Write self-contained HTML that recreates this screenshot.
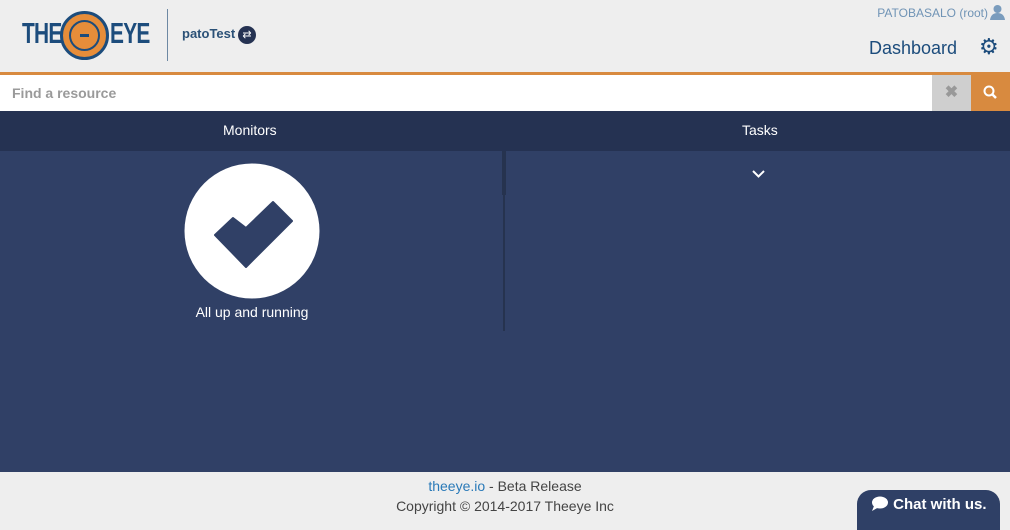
<!DOCTYPE html>
<html><head><meta charset="utf-8"><style>
*{margin:0;padding:0;box-sizing:border-box}
body{width:1010px;height:522px;overflow:hidden;font-family:"Liberation Sans",sans-serif;background:#eeeeee;position:relative}
.hdr{position:absolute;left:0;top:0;width:1010px;height:72px;background:#eeeeee}
.orange{position:absolute;top:72px;left:0;width:1010px;height:3px;background:#d88a3f}
.search{position:absolute;top:75px;left:0;width:932px;height:36px;background:#fff;color:#9a9a9a;font-size:14px;font-weight:bold;padding:10px 12px}
.xbtn{position:absolute;top:75px;left:932px;width:39px;height:36px;background:#cfcfcf;color:#999;font-size:16px;text-align:center;line-height:36px;font-weight:bold}
.sbtn{position:absolute;top:75px;left:971px;width:39px;height:36px;background:#d88a3f}
.tabs{position:absolute;top:111px;left:0;width:1010px;height:40px;background:#253252;color:#fff;font-size:14px}
.main{position:absolute;top:151px;left:0;width:1010px;height:321px;background:#304066}
.foot{position:absolute;top:472px;left:0;width:1010px;height:50px;text-align:center;font-size:14px;color:#444;line-height:20px;padding-top:4px}
.lg{position:absolute;top:18px;font-size:29px;font-weight:bold;color:#1c4c7c;transform:scaleX(.72);transform-origin:left;letter-spacing:-1px}
</style></head><body>
<div class="hdr">
 <div class="lg" style="left:22px">THE</div>
 <div style="position:absolute;left:60px;top:11px;width:49px;height:49px;border-radius:50%;background:#e68d3a;border:3px solid #1c4c7c"><div style="position:absolute;left:6px;top:6px;width:31px;height:31px;border-radius:50%;border:2px solid #1c4c7c"></div><div style="position:absolute;left:17px;top:20px;width:9px;height:3px;background:#1c4c7c"></div></div>
 <div class="lg" style="left:110px">EYE</div>
 <div style="position:absolute;left:167px;top:9px;width:1px;height:52px;background:#6d88a3"></div>
 <div style="position:absolute;left:182px;top:26px;font-size:13px;font-weight:bold;color:#2b5177">patoTest</div>
 <div style="position:absolute;left:238px;top:26px;width:18px;height:18px;border-radius:50%;background:#253252;color:#fff;font-size:11px;text-align:center;line-height:18px">⇄</div>
 <div style="position:absolute;right:22px;top:6px;font-size:12px;color:#6f93b5">PATOBASALO (root)</div>
 <svg style="position:absolute;left:990px;top:4px" width="15" height="16" viewBox="0 0 15 16"><circle cx="7.5" cy="5" r="4" fill="#7a9cbd"/><path d="M0 16 Q1 9 7.5 9 Q14 9 15 16Z" fill="#7a9cbd"/></svg>
 <div style="position:absolute;left:869px;top:38px;font-size:18px;color:#1c4c7c">Dashboard</div>
 <div style="position:absolute;left:979px;top:36px;font-size:22px;color:#1c4c7c;line-height:22px">⚙</div>
</div>
<div class="orange"></div>
<div class="search">Find a resource</div>
<div class="xbtn">✖</div>
<div class="sbtn"><svg width="39" height="36"><circle cx="18" cy="16" r="4.5" fill="none" stroke="#fff" stroke-width="2"/><line x1="21" y1="19" x2="25" y2="23" stroke="#fff" stroke-width="2.5"/></svg></div>
<div class="tabs"><span style="position:absolute;left:223px;top:11px">Monitors</span><span style="position:absolute;left:742px;top:11px">Tasks</span></div>
<div class="main">
 <div style="position:absolute;left:502px;top:0;width:4px;height:44px;background:#26334f"></div>
 <div style="position:absolute;left:503px;top:44px;width:2px;height:136px;background:#26334f"></div>
 <svg style="position:absolute;left:751px;top:18px" width="15" height="10"><path d="M2 2 L7.5 7.5 L13 2" stroke="#fff" stroke-width="2" fill="none"/></svg>
 <svg style="position:absolute;left:0;top:0" width="500" height="200"><circle cx="252" cy="80" r="67.5" fill="#fff"/><polygon points="215,84 233,67 246,77 273,51 292,70 246,116" fill="#304066" stroke="#304066" stroke-width="2" stroke-linejoin="round"/></svg>
 <div style="position:absolute;left:0;width:504px;top:153px;text-align:center;color:#fff;font-size:14px">All up and running</div>
</div>
<div class="foot"><span style="color:#2a7ab8">theeye.io</span> - Beta Release<br>Copyright © 2014-2017 Theeye Inc</div>
<div style="position:absolute;left:857px;top:490px;width:143px;height:40px;border-radius:14px 14px 0 0;background:#2f4066;color:#fff;font-size:15px;font-weight:bold;padding:6px 0 0 14px"><svg width="18" height="15" style="vertical-align:-2px" viewBox="0 0 18 15"><ellipse cx="9" cy="6.5" rx="8" ry="6" fill="#fff"/><path d="M3 10 L1 15 L8 11Z" fill="#fff"/></svg> Chat with us.</div>
</body></html>
